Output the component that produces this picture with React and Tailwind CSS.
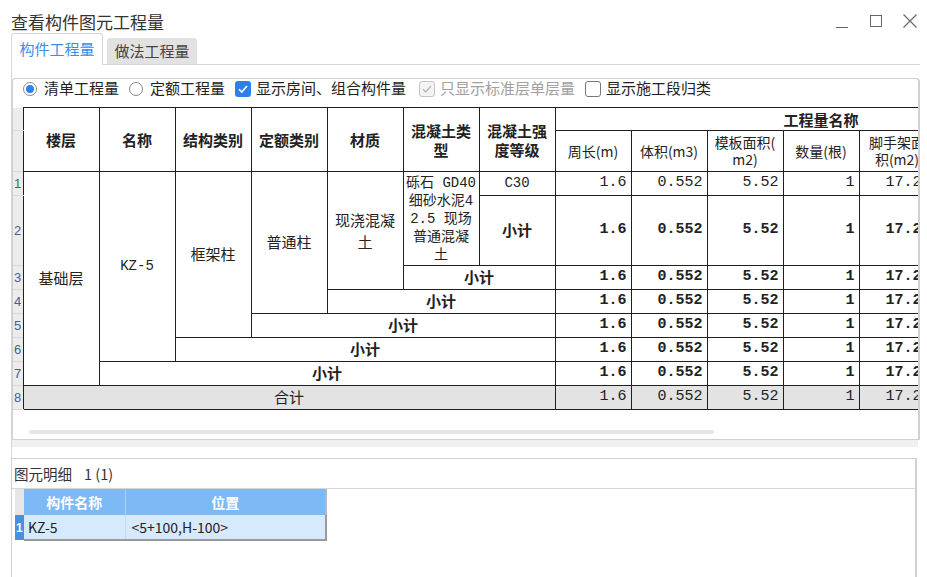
// App.jsx

const hd = "border border-[#1f1f1f] font-bold text-[15px] leading-[19px] text-center align-middle px-[2px]";
const sub = "border border-[#1f1f1f] text-[14px] leading-[17px] text-center align-middle px-[1px] font-['Noto_Sans_CJK_SC',sans-serif] font-normal";
const cell = "border border-[#1f1f1f] text-[14px] text-center align-middle px-[2px]";
const rn = "bg-[#ececec] border-b border-[#d8d8d8] text-[13px] leading-none text-[#4a5f88] font-['Liberation_Sans',sans-serif] text-left align-middle pl-[1px]";
const numN = "border border-[#1f1f1f] text-right align-middle pr-[4px] font-['Liberation_Mono',monospace] text-[15px]";
const numB = "border border-[#1f1f1f] text-right align-middle pr-[4px] font-['Liberation_Mono',monospace] text-[15px] font-bold";
const numG = "border border-[#1f1f1f] bg-[#e3e3e3] text-right align-middle pr-[4px] font-['Liberation_Mono',monospace] text-[15px]";

const vals = ["1.6", "0.552", "5.52", "1", "17.28", "0", "0"];

function Nums({ cls }) {
  return vals.map((v, i) => (
    <td key={i} className={cls}>
      {v}
    </td>
  ));
}

function Radio({ on, label }) {
  return (
    <label className="flex items-center gap-[7px]">
      <span className="w-[14px] h-[14px] rounded-full border border-[#8a8a8a] bg-white flex items-center justify-center">
        {on && <span className="w-[8px] h-[8px] rounded-full bg-[#2f80f0]" />}
      </span>
      <span>{label}</span>
    </label>
  );
}

function Check({ state, label, className = "" }) {
  // state: on | off | disabled
  return (
    <label className={(state === "disabled" ? "flex items-center gap-[5px] text-[#a0a0a0] " : "flex items-center gap-[5px] ") + className}>
      {state === "on" && (
        <span className="w-[16px] h-[16px] rounded-[3px] bg-[#2f7fe8] flex items-center justify-center">
          <svg width="12" height="12" viewBox="0 0 12 12">
            <path d="M2 6.2 L4.8 9 L10 3" fill="none" stroke="#fff" strokeWidth="1.6" />
          </svg>
        </span>
      )}
      {state === "disabled" && (
        <span className="w-[16px] h-[16px] rounded-[3px] border border-[#c4c4c4] bg-[#f3f3f3] flex items-center justify-center">
          <svg width="12" height="12" viewBox="0 0 12 12">
            <path d="M2 6.2 L4.8 9 L10 3" fill="none" stroke="#b8b8b8" strokeWidth="1.4" />
          </svg>
        </span>
      )}
      {state === "off" && <span className="w-[16px] h-[16px] rounded-[3px] border border-[#777] bg-white" />}
      <span>{label}</span>
    </label>
  );
}

export default function App() {
  return (
    <div className="w-[927px] h-[577px] bg-white overflow-hidden flex flex-col text-[#222] font-['Noto_Sans_CJK_SC',sans-serif]">
      {/* title bar */}
      <div className="h-[33px] flex items-start pl-[11px] pr-[10px] shrink-0">
        <h1 className="text-[17px] leading-[17px] mt-[13px] text-[#333]">查看构件图元工程量</h1>
        <div className="ml-auto mt-[14px] flex items-start">
          <svg width="12" height="14" viewBox="0 0 12 14">
            <path d="M0 13.5 H12" stroke="#666" strokeWidth="1" />
          </svg>
          <svg className="ml-[22px]" width="12" height="14" viewBox="0 0 12 14">
            <rect x="0.5" y="1.5" width="11" height="11" fill="none" stroke="#666" strokeWidth="1" />
          </svg>
          <svg className="ml-[21px]" width="14" height="14" viewBox="0 0 14 14">
            <path d="M0.5 0.5 L13.5 13.5 M13.5 0.5 L0.5 13.5" stroke="#666" strokeWidth="1.1" />
          </svg>
        </div>
      </div>

      {/* tabs */}
      <div className="h-[31px] flex items-end pl-[11px] gap-[4px] shrink-0 relative z-10">
        <div className="w-[92px] h-[32px] -mb-[1px] bg-white border border-b-0 border-[#d6d6d6] rounded-t-[3px] flex items-center justify-center text-[15px] text-[#3c8ce8]">
          构件工程量
        </div>
        <div className="w-[90px] h-[26px] bg-[#e2e2e2] rounded-t-[3px] flex items-center justify-center text-[15px] text-[#444]">
          做法工程量
        </div>
      </div>

      {/* top panel */}
      <div className="ml-[11px] w-[909px] h-[376px] border-t border-l border-[#d6d6d6] pt-[13px] shrink-0 flex flex-col">
        <div className="flex-1 border-t border-l border-r-2 border-b border-[#d0d0d0] rounded-t-[4px] flex flex-col overflow-hidden">
          {/* toolbar */}
          <div className="h-[28px] pb-[9px] flex items-center pl-[10px] gap-[10px] text-[15px] shrink-0">
            <Radio on label="清单工程量" />
            <Radio label="定额工程量" />
            <Check state="on" label="显示房间、组合构件量" />
            <Check state="disabled" label="只显示标准层单层量" className="ml-[3px]" />
            <Check state="off" label="显示施工段归类" />
          </div>

          {/* grid */}
          <div className="overflow-hidden shrink-0">
            <table className="border-collapse table-fixed w-[1074px] font-['Noto_Sans_CJK_SC',sans-serif]">
              <colgroup>
                <col className="w-[10px]" />
                {Array.from({ length: 14 }).map((_, i) => (
                  <col key={i} className="w-[76px]" />
                ))}
              </colgroup>
              <thead>
                <tr className="h-[23px]">
                  <th className={rn}></th>
                  <th rowSpan={2} className={hd}>楼层</th>
                  <th rowSpan={2} className={hd}>名称</th>
                  <th rowSpan={2} className={hd}>结构类别</th>
                  <th rowSpan={2} className={hd}>定额类别</th>
                  <th rowSpan={2} className={hd}>材质</th>
                  <th rowSpan={2} className={hd}>混凝土类<br />型</th>
                  <th rowSpan={2} className={hd}>混凝土强<br />度等级</th>
                  <th colSpan={7} className={hd}>工程量名称</th>
                </tr>
                <tr className="h-[41px]">
                  <th className={rn}></th>
                  <th className={sub}>周长(m)</th>
                  <th className={sub}>体积(m3)</th>
                  <th className={sub}>模板面积(<br />m2)</th>
                  <th className={sub}>数量(根)</th>
                  <th className={sub}>脚手架面<br />积(m2)</th>
                  <th className={sub}>超高模板<br />面积(m2)</th>
                  <th className={sub}>截面周长<br />(m)</th>
                </tr>
              </thead>
              <tbody>
                <tr className="h-[24px]">
                  <td className={rn}>1</td>
                  <td rowSpan={7} className={cell + " text-[15px]"}>基础层</td>
                  <td rowSpan={6} className={cell + " font-['Liberation_Mono',monospace] text-[14px]"}>KZ-5</td>
                  <td rowSpan={5} className={cell + " text-[15px]"}>框架柱</td>
                  <td rowSpan={4} className={cell + " text-[15px]"}>普通柱</td>
                  <td rowSpan={3} className={cell + " text-[15px] leading-[22px]"}>现浇混凝<br />土</td>
                  <td rowSpan={2} className="border border-[#1f1f1f] text-center align-middle px-0 whitespace-nowrap text-[14px] leading-[18px] font-['Liberation_Mono','Noto_Sans_CJK_SC',monospace]">
                    砾石 GD40<br />细砂水泥4<br />2.5 现场<br />普通混凝<br />土
                  </td>
                  <td className={cell + " font-['Liberation_Mono',monospace] text-[14px]"}>C30</td>
                  <Nums cls={numN} />
                </tr>
                <tr className="h-[70px]">
                  <td className={rn}>2</td>
                  <td className={cell + " font-bold text-[15px]"}>小计</td>
                  <Nums cls={numB} />
                </tr>
                <tr className="h-[24px]">
                  <td className={rn}>3</td>
                  <td colSpan={2} className={cell + " font-bold text-[15px]"}>小计</td>
                  <Nums cls={numB} />
                </tr>
                <tr className="h-[24px]">
                  <td className={rn}>4</td>
                  <td colSpan={3} className={cell + " font-bold text-[15px]"}>小计</td>
                  <Nums cls={numB} />
                </tr>
                <tr className="h-[24px]">
                  <td className={rn}>5</td>
                  <td colSpan={4} className={cell + " font-bold text-[15px]"}>小计</td>
                  <Nums cls={numB} />
                </tr>
                <tr className="h-[24px]">
                  <td className={rn}>6</td>
                  <td colSpan={5} className={cell + " font-bold text-[15px]"}>小计</td>
                  <Nums cls={numB} />
                </tr>
                <tr className="h-[24px]">
                  <td className={rn}>7</td>
                  <td colSpan={6} className={cell + " font-bold text-[15px]"}>小计</td>
                  <Nums cls={numB} />
                </tr>
                <tr className="h-[24px]">
                  <td className={rn}>8</td>
                  <td colSpan={7} className={cell + " bg-[#e3e3e3] text-[15px]"}>合计</td>
                  <Nums cls={numG} />
                </tr>
              </tbody>
            </table>
          </div>

          {/* horizontal scrollbar */}
          <div className="flex-1 flex items-end pb-[5px] pl-[16px]">
            <div className="w-[685px] h-[4px] rounded-full bg-[#e6e6e6]" />
          </div>
        </div>
      </div>

      {/* splitter */}
      <div className="ml-[11px] w-[907px] h-[18px] border-l border-[#d6d6d6] shrink-0 flex flex-col">
        <div className="h-[7px] bg-[#f0f0f0]" />
      </div>

      {/* bottom panel: detail */}
      <div className="ml-[11px] w-[906px] flex-1 border-t border-l border-r-2 border-[#d0d0d0] flex flex-col">
        <div className="h-[30px] flex items-center pl-[2px] text-[14.5px] text-[#333] border-b border-[#d6d6d6] shrink-0">
          <span>图元明细</span>
          <span className="ml-[12px]">1 (1)</span>
        </div>
        <div className="pl-[3px]">
          <table className="border-collapse table-fixed w-[311px] text-[14px]">
            <colgroup>
              <col className="w-[9px]" />
              <col className="w-[101px]" />
              <col className="w-[201px]" />
            </colgroup>
            <thead>
              <tr className="h-[26px]">
                <th className="bg-[#e6e6e6]"></th>
                <th className="bg-[#7db9f4] text-white font-bold border-r border-[#a9cff5]">构件名称</th>
                <th className="bg-[#7db9f4] text-white font-bold border-r-2 border-[#b7b7b7]">位置</th>
              </tr>
            </thead>
            <tbody>
              <tr className="h-[25px]">
                <td className="bg-[#4a90e2] text-white text-[12px] font-['Liberation_Sans',sans-serif] font-bold text-left pl-[1px]">1</td>
                <td className="bg-[#d7e9fc] pl-[4px] text-left border-r border-b-2 border-r-[#c4ddf5] border-b-[#9a9a9a]">KZ-5</td>
                <td className="bg-[#d7e9fc] pl-[6px] text-left border-r-2 border-b-2 border-[#9a9a9a]">&lt;5+100,H-100&gt;</td>
              </tr>
            </tbody>
          </table>
        </div>
      </div>
    </div>
  );
}
